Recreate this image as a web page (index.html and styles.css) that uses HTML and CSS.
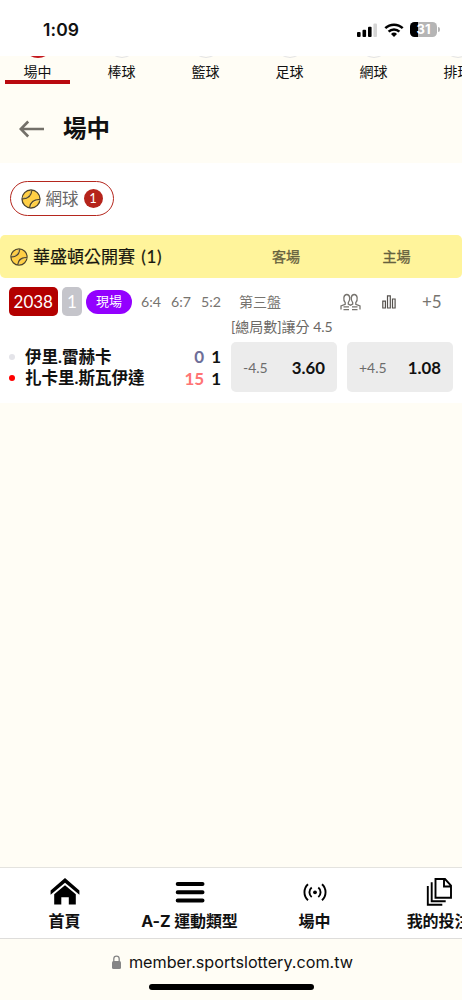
FILE: index.html
```html
<!DOCTYPE html>
<html lang="zh-Hant">
<head>
<meta charset="utf-8">
<meta name="viewport" content="width=device-width, initial-scale=1">
<title>場中</title>
<link rel="stylesheet" href="styles.css">
</head>
<body>
<svg class="defs" width="0" height="0">
  <symbol id="tennis" viewBox="0 0 20 20">
    <circle cx="10" cy="10" r="9" fill="#ffcf45" stroke="#4b432d" stroke-width="1.3"/>
    <path d="M1.200 9.600C7 9.800 10 7 10.600 1.200M8.800 18.800C9.200 13.400 13 10.400 18.800 10.800" fill="none" stroke="#4b432d" stroke-width="1.700"/>
    <path d="M1.500 8.800C6.400 9 9.500 6.200 9.800 1.500M9.800 18.400C10.200 14.200 13.600 11.400 18.500 11.500" fill="none" stroke="#ffe590" stroke-width=".7"/>
  </symbol>
</svg>
<div class="phone">
  <header class="status">
    <span class="clock">1:09</span>
    <div class="indicators">
      <svg width="20" height="14" viewBox="0 0 20 14"><rect y="9" width="3.6" height="5" rx="1"/><rect x="5.5" y="6.7" width="3.6" height="7.3" rx="1"/><rect x="11" y="3.8" width="3.6" height="10.2" rx="1"/><rect x="16.4" y="0.5" width="3.6" height="13.5" rx="1" fill="#d5d5d5"/></svg>
      <svg class="wifi" width="20" height="14" viewBox="0 0 20 14" fill="none" stroke="#000" stroke-width="2.5"><path d="M1.3 5.2a12.4 12.4 0 0 1 17.4 0M4.6 8.6a7.7 7.7 0 0 1 10.8 0"/><path d="M10 14 7 11a4.3 4.3 0 0 1 6 0z" fill="#000" stroke="none"/></svg>
      <div class="battery"><span>31</span></div><i class="battery-tip"></i>
    </div>
  </header>
  <nav class="tabs">
    <a class="tab active"><i class="ring"></i>場中</a>
    <a class="tab"><i class="ring"></i>棒球</a>
    <a class="tab"><i class="ring"></i>籃球</a>
    <a class="tab"><i class="ring"></i>足球</a>
    <a class="tab"><i class="ring"></i>網球</a>
    <a class="tab"><i class="ring"></i>排球</a>
  </nav>
  <div class="heading">
    <svg width="26" height="18" viewBox="0 0 26 18" fill="none" stroke="#737069" stroke-width="2.6"><path d="M25 9H2M9.2 1.500 1.800 9l7.400 7.500"/></svg>
    <h1>場中</h1>
  </div>
  <main class="panel">
    <div class="filters">
      <button class="chip"><svg width="20" height="20"><use href="#tennis"/></svg><span class="chip-name">網球</span><b class="count">1</b></button>
    </div>
    <div class="league">
      <svg width="18" height="18"><use href="#tennis"/></svg>
      <h2>華盛頓公開賽 <span class="total">(1)</span></h2>
      <span class="side">客場</span><span class="side">主場</span>
    </div>
    <section class="match">
      <div class="info">
        <span class="code">2038</span><span class="num">1</span><span class="live">現場</span>
        <span class="sets"><span>6:4</span><span>6:7</span><span>5:2</span></span>
        <span class="period">第三盤</span>
        <svg class="people" width="21" height="18" viewBox="0 0 21 18" fill="none" stroke="#77746f" stroke-width="1.3"><path d="M1 16.500v-3.500l4.200-1.700V9.600C3 7 3.300 1.500 6.800 1.500S10.500 7 8.300 9.600v1.600l2.200 1 2.200-1V9.600C10.500 7 10.700 1.500 14.200 1.500S18 7 15.800 9.600v1.700l4.200 1.700v3.500"/><path d="M3.500 13.800h5.500M12 13.800h5.500M3.500 16.700h5.500M12 16.700h5.500"/></svg>
        <svg class="bars" width="14" height="14" viewBox="0 0 14 14" fill="none" stroke="#55514d" stroke-width="1.2"><path d="M.8 6.200h2.600v6.800H.8zM5.500.8h2.800V13H5.500zM10.500 4h2.600v9h-2.600z"/></svg>
        <span class="more">+5</span>
      </div>
      <div class="market">[總局數]讓分 4.5</div>
      <div class="play">
        <div class="teams">
          <div class="team"><i class="dot"></i><span class="name">伊里.雷赫卡</span><b class="points">0</b><b class="games">1</b></div>
          <div class="team serving"><i class="dot"></i><span class="name">扎卡里.斯瓦伊達</span><b class="points">15</b><b class="games">1</b></div>
        </div>
        <button class="odd"><span>-4.5</span><b>3.60</b></button>
        <button class="odd"><span>+4.5</span><b>1.08</b></button>
      </div>
    </section>
  </main>
  <nav class="bottom">
    <a class="item"><svg width="30" height="30" viewBox="0 0 30 30"><path d="M.6 13.500 15 1l14.400 12.500v4.200L15 5.800.6 17.700z"/><path d="M4.200 17.300 15 8.300l10.800 9V27.500h-7v-7.300h-7.500v7.300H4.200z"/></svg>首頁</a>
    <a class="item"><svg width="30" height="30" viewBox="0 0 30 30" stroke="#000" stroke-width="4" stroke-linecap="round"><path d="M2.700 7h24.800M2.700 15.200h24.800M2.700 23.400h24.800"/></svg>A-Z 運動類型</a>
    <a class="item"><svg width="30" height="30" viewBox="0 0 30 30" fill="none" stroke="#000" stroke-width="1.900"><circle cx="15" cy="15.300" r="1.900" fill="#000" stroke="none"/><path d="M11.700 10.500a6.200 6.200 0 0 0 0 9.600M18.300 10.500a6.200 6.200 0 0 1 0 9.600M8 7.300a10.800 10.800 0 0 0 0 16M22 7.300a10.800 10.800 0 0 1 0 16"/></svg>場中</a>
    <a class="item"><svg width="30" height="30" viewBox="0 0 30 30" fill="none" stroke="#000" stroke-width="1.900"><path d="M11.500 2H21l6 6.500v12.200H11.500zM20 2v7.500h7M7.700 5.200v19h14M3.800 9v18.700h14.500"/></svg>我的投注</a>
  </nav>
  <footer class="browser">
    <div class="address"><svg width="9" height="14" viewBox="0 0 9 14"><rect y="6" width="9" height="8" rx="1.500" fill="#858585"/><path d="M1.800 7V3.800a2.700 2.700 0 0 1 5.400 0V7" fill="none" stroke="#858585" stroke-width="1.300"/></svg><span>member.sportslottery.com.tw</span></div>
    <div class="home-bar"></div>
  </footer>
</div>
</body>
</html>
```
FILE: styles.css
```css
* { box-sizing: border-box; }
body { margin: 0; background: #fffdf5; }
.defs { display: block; }
.phone {
  display: flex; flex-direction: column; width: 462px; height: 1000px;
  overflow: hidden; background: #fffdf5; color: #111;
  font-family: Lato, "Noto Sans CJK TC", sans-serif;
}
button { appearance: none; margin: 0; font: inherit; color: inherit; }
svg { display: block; flex: none; }
.status {
  display: flex; justify-content: space-between; height: 56px; flex: none;
  padding: 18px 22px 0 43px; background: #fff; font-family: Inter, sans-serif;
}
.clock { font-size: 17.5px; line-height: 24px; font-weight: 600; letter-spacing: .1px; }
.indicators { display: flex; align-items: center; height: 23px; }
.wifi { margin: 0 6px 0 7px; }
.battery {
  width: 27px; height: 15px; border-radius: 4.5px; color: #fff; text-align: center;
  background: linear-gradient(90deg, #000 8.5px, #b5b5b5 8.5px);
  font-size: 13px; line-height: 15px; font-weight: 700;
}
.battery-tip { width: 2px; height: 5px; margin-left: 1px; border-radius: 0 2px 2px 0; background: #b5b5b5; }
.tabs { display: flex; height: 38px; flex: none; overflow: hidden; padding-left: 5px; }
.tab {
  display: flex; flex-direction: column; align-items: center; flex: none;
  width: 65px; height: 28px; margin-right: 19px; font-size: 14px; line-height: 20px;
}
.tab.active { border-bottom: 4px solid #b9090f; }
.ring { flex: none; width: 30px; height: 30px; margin: -28px 0 3.5px; border: 1.5px solid #e3e3e5; border-radius: 50%; }
.active .ring { border: 2px solid #c4161c; }
.heading { display: flex; align-items: center; height: 69px; flex: none; padding-left: 19px; gap: 18px; }
h1 { margin: -1px 0 0; font-size: 23.5px; font-weight: 700; line-height: 34px; }
.panel { height: 240px; flex: none; background: #fff; }
.filters { height: 72px; padding: 18px 9.5px; }
.chip {
  display: flex; align-items: center; width: 104px; height: 35px; padding: 0 10px;
  border: 1.5px solid #b5271e; border-radius: 18px; background: #fff;
}
.chip-name { margin: -2px 5px 0; font-size: 16.5px; color: #686868; }
.count { flex: none; width: 19px; height: 19px; border-radius: 50%; background: #b5241b; color: #fff; font-size: 13px; font-weight: 400; line-height: 19px; text-align: center; }
.league { display: flex; align-items: center; height: 43px; padding-left: 10px; border-radius: 5px; background: #fff49b; }
h2 { width: 204px; margin: 0 0 0 5px; font-size: 17px; font-weight: 400; line-height: 24px; white-space: nowrap; color: #18170e; -webkit-text-stroke: .2px; }
.total { margin-left: 2px; letter-spacing: .6px; }
.side { width: 98px; margin: -2px 12.5px 0 0; text-align: center; font-size: 14px; color: #66613e; -webkit-text-stroke: .35px; }
.info { display: flex; align-items: center; height: 30px; margin-top: 8.5px; padding-left: 9px; color: #77746f; }
.code, .num { flex: none; height: 29px; border-radius: 5px; color: #fff; font-size: 17px; line-height: 30px; text-align: center; }
.code { width: 48.5px; background: #b30000; }
.num { width: 20px; margin: 0 4px 0 4.5px; background: #c5c5cb; }
.live { flex: none; width: 46px; height: 24px; border-radius: 12px; background: #9300ff; color: #fff; text-align: center; font-size: 13px; line-height: 23px; }
.sets { flex: none; display: flex; gap: 10px; width: 98px; padding-left: 9px; font-size: 14.2px; }
.period { flex: none; width: 110px; margin-top: -2px; padding-left: 9px; font-size: 14px; }
.people { margin-right: 21px; }
.bars { margin-right: 26px; }
.more { font-size: 17px; }
.market { height: 25.5px; margin-left: 231px; font-size: 14px; line-height: 19px; color: #6b6864; white-space: nowrap; }
.play { display: flex; gap: 10px; height: 50px; }
.teams { width: 221px; padding-top: 4px; }
.team { display: flex; align-items: center; height: 21.5px; font-size: 17px; line-height: 21px; }
.dot { width: 6px; height: 6px; margin: 0 10px 0 9px; border-radius: 50%; background: #e4e4e9; }
.serving .dot { background: #f00; }
.name { flex: 1; margin-top: 1px; font-size: 16.5px; font-weight: 700; white-space: nowrap; }
.points { color: #6e6e98; }
.serving .points { color: #ff7474; }
.games { margin-left: 7px; }
.odd { display: flex; align-items: center; justify-content: space-between; width: 106px; padding: 0 12px; border: 0; border-radius: 5px; background: #ececec; color: #111; font-size: 16.8px; }
.odd span { color: #6c6c6c; font-size: 14px; }
.bottom {
  display: flex; height: 72px; flex: none; margin-top: auto; overflow: hidden; padding-left: 2px;
  border-top: 1px solid #e4e3df; border-bottom: 1px solid #dedddb; background: #fff;
}
.item {
  display: flex; flex-direction: column; align-items: center; flex: none; width: 125px;
  padding-top: 9px; font: 700 16px/24px Inter, "Noto Sans CJK TC", sans-serif;
  letter-spacing: -.1px; white-space: nowrap;
}
.item:last-child { margin-left: -1px; }
.item svg { margin-bottom: 2px; }
.browser { height: 61px; flex: none; }
.address { display: flex; align-items: center; justify-content: center; gap: 8px; height: 45px; padding-left: 3px; font: 16.2px Inter, sans-serif; }
.home-bar { width: 165px; height: 6px; margin: 0 auto; border-radius: 3px; background: #000; }
```
